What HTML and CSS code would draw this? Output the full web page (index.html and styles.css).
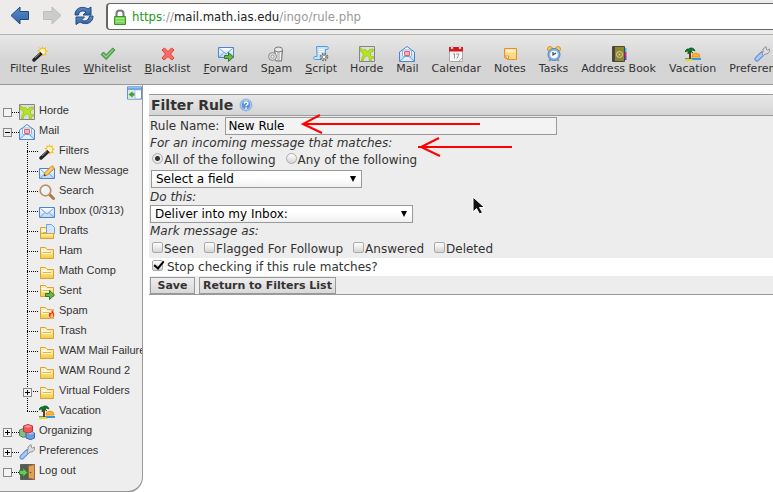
FILE: index.html
```html
<!DOCTYPE html>
<html lang="en">
<head>
    <meta charset="UTF-8">
    <title>Filter Rule</title>
    <meta name="viewport" content="width=device-width, initial-scale=1.0">
    <link rel="stylesheet" href="styles.css">
</head>
<body>
    <!-- icon set -->
    <svg class="sprite" aria-hidden="true">
        <defs>
            <linearGradient id="gold" x1="0" y1="0" x2="0" y2="1"><stop offset="0" stop-color="#fff6c4"/><stop offset="1" stop-color="#f3cb3f"/></linearGradient>
            <linearGradient id="sky" x1="0" y1="0" x2="0" y2="1"><stop offset="0" stop-color="#fff"/><stop offset="1" stop-color="#b9d5f4"/></linearGradient>
            <linearGradient id="navy" x1="0" y1="0" x2="0" y2="1"><stop offset="0" stop-color="#5e8cc4"/><stop offset="1" stop-color="#2f64a8"/></linearGradient>
        </defs>
        <symbol id="wand" viewBox="0 0 16 16">
            <path d="M10.500 0l1 2.500L14 1l-.5 3 2.500 1-2.500 1.500L15 9.500l-3-1-1.500 2.500-1-3-3 .5 1-2.500L5 4.500l3-1L7 1l2.500 1.500z" fill="#f9b91b"/>
            <circle cx="10.500" cy="5.500" r="2.800" fill="#fff3a8"/>
            <path d="M2 14L9 7.500" stroke="#222" stroke-width="3.400" stroke-linecap="round"/>
            <path d="M3 12L8 7.400" stroke="#8b8b8b" stroke-width="1"/>
            <path d="M9.500 7L11 5.500" stroke="#fafafa" stroke-width="3"/>
        </symbol>
        <symbol id="tick" viewBox="0 0 16 16">
            <path d="M1 8.500L3.500 6 6 8.700 12.700 2 15 4 6.200 13.600z" fill="#63b35c" stroke="#3f9140"/>
            <path d="M3 8l3 3 7-7.500" fill="none" stroke="#9bd68f"/>
        </symbol>
        <symbol id="cross" viewBox="0 0 16 16">
            <path d="M2 4L4.500 2 8 5.500 11.500 2 14 4 10.500 8 14 12 12 14 8 10.500 4 14 2 12 5.500 8z" fill="#ff6b64" stroke="#e23f3c"/>
        </symbol>
        <symbol id="envelope" viewBox="0 0 16 16">
            <path d="M.5 3.500h15v10H.5z" fill="url(#sky)" stroke="#4d84cb"/>
            <path d="M1.500 4.500L8 10l6.500-5.500M1.500 13L6 8.500M14.500 13L10 8.500" fill="none" stroke="#6c9ede"/>
        </symbol>
        <symbol id="go" viewBox="0 0 16 16">
            <path d="M6.500 9.500h4v-3l5 4.500-5 4.500v-3h-4z" fill="#6bb34e" stroke="#2f7a2a"/>
        </symbol>
        <symbol id="forward" viewBox="0 0 16 16">
            <use href="#envelope" y="-2"/><use href="#go"/>
        </symbol>
        <symbol id="trash" viewBox="0 0 16 16">
            <path d="M6.500 4l1.500 11h5.500l1-11z" fill="#c9c9c9" stroke="#777"/>
            <path d="M8.500 5v9M12.500 5v9" stroke="#f4f4f4"/>
            <ellipse cx="10.500" cy="3.500" rx="4" ry="2.500" fill="#e8e8e8" stroke="#777"/>
            <circle cx="4.500" cy="10.500" r="4" fill="#d8d8d8" stroke="#8a8a8a"/>
            <circle cx="4.500" cy="10.500" r="1.500" fill="#f7f7f7" stroke="#999"/>
        </symbol>
        <symbol id="script" viewBox="0 0 16 16">
            <path d="M3.500.5h11c1 0 1 3 0 3h-2v10H2c-2 0-2-3 0-3h2z" fill="#c5e0fb" stroke="#5b9bdc"/>
            <path d="M6 3.500h5M6 5.500h5M6 7.500h4" stroke="#fff"/>
            <circle cx="11" cy="11" r="3.300" fill="#ddd" stroke="#777" stroke-width="2" stroke-dasharray="1.600 1"/>
            <circle cx="11" cy="11" r="1.800" fill="#fff" stroke="#888"/>
        </symbol>
        <symbol id="horde" viewBox="0 0 16 16">
            <path d="M.5.500h15v15H.5z" fill="#dcdcdc" stroke="#858585"/>
            <path d="M1 1.500L4 4l2.500-.5L9 6l1.500-2.500L14 3l.5 2-3 1.500v3l1.500 1.500 2-.5v1.500l-2.500.5L12 15h-1.500L10 11.500 8 9.500 6.500 11 5 11.500 4 15H2.500l.5-3.500L4.500 9 3.500 6.500 1 5z" fill="#b5e61d" stroke="#8cbb16" stroke-width=".7"/>
        </symbol>
        <symbol id="mail" viewBox="0 0 16 16">
            <path d="M.5 6L4 3.500 8 .5 12 3.500 15.500 6v9.500H.5z" fill="url(#sky)" stroke="#4d84cb"/>
            <path d="M3.500 4h9v6l-4.500 2.500L3.500 10z" fill="#fff" stroke="#8bb0de"/>
            <path d="M5.500 5.500h5v4h-5z" fill="#f5b3bb" stroke="#dd6375"/>
            <path d="M1 15l5-4.500h4l5 4.500" fill="#e3effc" stroke="#6c9ede"/>
        </symbol>
        <symbol id="calendar" viewBox="0 0 16 16">
            <path d="M1.500 4v11.500h13V4z" fill="#f7f7f7" stroke="#aaa"/>
            <path d="M1 1h14v4.500H1z" fill="#d9141c"/>
            <path d="M3 0h2v3H3zM11 0h2v3h-2z" fill="#eee" stroke="#999" stroke-width=".5"/>
            <path d="M5 8.500l1.500-1v5M8 8h3l-2 4.500" fill="none" stroke="#999"/>
            <path d="M11 15l4-4" stroke="#aaa"/>
        </symbol>
        <symbol id="note" viewBox="0 0 16 16">
            <path d="M2.500 2.500h12v11H6l-3.500-2z" fill="#fbd983" stroke="#e58e2a"/>
            <path d="M3.500 3.500h10v3h-10z" fill="#fff1c7"/>
            <path d="M2.500 10h4v3.500z" fill="#fff" stroke="#e58e2a"/>
        </symbol>
        <symbol id="clock" viewBox="0 0 16 16">
            <path d="M3 15l2-2M13 15l-2-2" stroke="#999" stroke-width="2"/>
            <circle cx="4" cy="3" r="2.500" fill="#fbc94f" stroke="#d8922b"/><circle cx="12" cy="3" r="2.500" fill="#fbc94f" stroke="#d8922b"/>
            <circle cx="8" cy="8.500" r="6" fill="#88b8e8" stroke="#4c83c3"/>
            <circle cx="8" cy="8.500" r="3.800" fill="#fff"/>
            <path d="M7 6v3l3-2" fill="none" stroke="#345" stroke-width="1.200"/>
        </symbol>
        <symbol id="book" viewBox="0 0 16 16">
            <path d="M12 2h3.500v4H12z" fill="#2fc5ee"/><path d="M12 6h3.500v4H12z" fill="#f0189c"/><path d="M12 10h3.500v4H12z" fill="#7936d8"/>
            <path d="M1.500.5h12v15h-12z" fill="#8c8437" stroke="#4f4b2a"/>
            <path d="M3 1v14" stroke="#444" stroke-width="2"/>
            <circle cx="8.500" cy="8.500" r="3" fill="none" stroke="#e5d68a"/><circle cx="8.500" cy="8.500" r="1" fill="#e5d68a"/>
        </symbol>
        <symbol id="island" viewBox="0 0 16 16">
            <path d="M0 12h16v2H0z" fill="#2f9be8"/><path d="M0 13h7l2 2H0z" fill="#f5d415"/>
            <path d="M7 11a4 3.800 0 0 1 8 0z" fill="#ffb52e" stroke="#f39317"/>
            <path d="M4 5h2v8H4z" fill="#6b3b16"/>
            <path d="M0 5l2-2h2l1-1 2 0 2 1 1 2-3-1-1 1 2 2-3-2-2 3V5H2L0 6z" fill="#0c7a2a" stroke="#07601e" stroke-width=".8"/>
        </symbol>
        <symbol id="wrench" viewBox="0 0 16 16">
            <path d="M3 13L8 8" stroke="#5a8cd6" stroke-width="5" stroke-linecap="round"/>
            <path d="M3 13L8 8" stroke="#a9c9f4" stroke-width="3" stroke-linecap="round"/>
            <path d="M8 8l1-2V3l3-2.500.5 3 1 .5 2.500-1-.5 3L13 8h-2L9.500 9.500z" fill="#ddd" stroke="#8a8a8a" stroke-width=".9"/>
        </symbol>
        <symbol id="folder" viewBox="0 0 16 16">
            <path d="M1.500 3.500h5l1.500 2h6.500v9h-13z" fill="url(#gold)" stroke="#dd9f3b"/>
            <path d="M2.500 6.500h4l1.500-1" fill="none" stroke="#fff"/><path d="M4 8.500h8" stroke="#e8b440"/><path d="M3 9.500h10M3 7.500h8" stroke="#fffbe3"/>
        </symbol>
        <symbol id="drafts" viewBox="0 0 16 16">
            <use href="#folder"/><path d="M7.500.5h5l3 3v6h-8z" fill="#d3e7fd" stroke="#6fa3df"/><path d="M1.500 9.500h13v5h-13z" fill="url(#gold)" stroke="#dd9f3b"/>
        </symbol>
        <symbol id="sent" viewBox="0 0 16 16"><use href="#folder" y="-2"/><use href="#go"/></symbol>
        <symbol id="hot" viewBox="0 0 16 16">
            <use href="#folder"/><path d="M12.500 3c0 3 3.500 5 3 8.500-1 3.500-5 3.500-6 .5-.5-2 .5-3 1.500-4l1 1z" fill="#e8301c" stroke="#fff" stroke-width=".6"/>
            <path d="M13 9c2 3 1 4.500-.5 4.500S10.500 12 13 9z" fill="#ffd23b"/>
        </symbol>
        <symbol id="compose" viewBox="0 0 16 16">
            <use href="#envelope" y="1"/><path d="M5 12l1-3.500L12.500 2l2.500 2.500L8.500 11z" fill="#f9cf62" stroke="#c4872a"/><path d="M5 12l.5-2 1.500 1.500z" fill="#333"/><path d="M12 2.500l1.500-1.500 2 2L14.500 5z" fill="#f2a05d"/>
        </symbol>
        <symbol id="lens" viewBox="0 0 16 16">
            <path d="M10 10l4.500 4.500" stroke="#b9753c" stroke-width="3" stroke-linecap="round"/>
            <circle cx="6.500" cy="6.500" r="5.300" fill="#e8f2fb" stroke="#c58f5b" stroke-width="1.700"/><path d="M3.500 7a3 3 0 0 1 3-3.500" fill="none" stroke="#fff" stroke-width="1.500"/>
        </symbol>
        <symbol id="cubes" viewBox="0 0 16 16">
            <path d="M.5 6l4-1.500L8 6v6l-3.500 1.500-4-2z" fill="#7fbf85" stroke="#4b8a55"/>
            <path d="M7 9l4.500-1.500L15.500 9v5l-4 1.700L7 14z" fill="#6b9be0" stroke="#3a66a8"/>
            <path d="M7 9l4.500 1.500 4-1.500-4-1.500z" fill="#a9c8f3"/>
            <path d="M4.500 2L9 .5 13.500 2v5.500L9 9 4.500 7.500z" fill="#ee5757" stroke="#c73232"/>
            <path d="M5 2.500L9 4l4-1.500L9 1z" fill="#fa9290"/>
        </symbol>
        <symbol id="door" viewBox="0 0 16 16">
            <path d="M1.500.5h14v15h-14z" fill="#555b55" stroke="#5f5f5f"/>
            <path d="M9.500 2l6-1.500v15l-6-1.500z" fill="#dda35b" stroke="#a8692c"/><circle cx="11.500" cy="8.500" r=".8" fill="#7a4418"/>
            <path d="M.5 6.500H4V4l4.500 4.500L4 13v-2.500H.5z" fill="#6fc45c" stroke="#2f8a32"/>
        </symbol>
        <symbol id="collapse" viewBox="0 0 16 14">
            <path d="M.5.5h15v13H.5z" fill="#fff" stroke="#4d84cb"/><path d="M1 1h14v3H1z" fill="#77a6e4"/>
            <path d="M1 4h7v9H1z" fill="#d7ecd4"/><path d="M8.500 4v9" stroke="#9cbce4"/>
            <path d="M1.500 8.500L6 5v2h2v3H6v2z" fill="#4a9c4a"/>
        </symbol>
        <symbol id="help" viewBox="0 0 16 16">
            <circle cx="8" cy="8" r="7" fill="#5e93d8" stroke="#a9c3e6"/><circle cx="8" cy="8" r="5.500" fill="none" stroke="#cfe0f6"/>
            <path d="M6 6.500C6 4 10.200 4 10.200 6.300 10.200 7.800 8 7.800 8 9.500" fill="none" stroke="#fff" stroke-width="1.500"/><circle cx="8" cy="11.600" r="1" fill="#fff"/>
        </symbol>
        <symbol id="back" viewBox="0 0 20 20"><path d="M1 9.500L10 1v4.500h8.500v8H10V18z" fill="url(#navy)" stroke="#204a87"/></symbol>
        <symbol id="next" viewBox="0 0 20 20"><path d="M19 9.500L10 1v4.500H1.500v8H10V18z" fill="#cbcdcb" stroke="#bdbfbd"/></symbol>
        <symbol id="reload" viewBox="0 0 20 20">
            <path d="M1 9C1 3 6 0 12 2l2 1 3-2v8h-8l3-3C9 4 5 5 4.500 9z" fill="url(#navy)" stroke="#204a87"/>
            <path d="M19 10c0 6-5 9-11 7l-2-1-4 2.500V11h8.500l-3 3c3 2 7 1 8-4z" fill="url(#navy)" stroke="#204a87"/>
        </symbol>
        <symbol id="lock" viewBox="0 0 12 16">
            <path d="M2.500 8V4.500c0-4 7-4 7 0V8" fill="none" stroke="#777" stroke-width="2"/>
            <path d="M.5 7.500h11v8H.5z" fill="#7dd35c" stroke="#3f8f2c"/><path d="M2 9.500h8M2 12.500h8" stroke="#a6e88b"/>
        </symbol>
    </svg>

    <header class="browser">
        <button class="nav-btn" aria-label="Back"><svg><use href="#back"/></svg></button>
        <button class="nav-btn" aria-label="Forward" disabled><svg><use href="#next"/></svg></button>
        <button class="nav-btn" aria-label="Reload"><svg><use href="#reload"/></svg></button>
        <div class="address">
            <svg class="lock"><use href="#lock"/></svg>
            <span class="url"><span class="secure">https</span>://<span class="host">mail.math.ias.edu</span>/ingo/rule.php</span>
        </div>
    </header>

    <nav class="menu">
        <a href="#"><svg><use href="#wand"/></svg><span>Filter <u>R</u>ules</span></a>
        <a href="#"><svg><use href="#tick"/></svg><span><u>W</u>hitelist</span></a>
        <a href="#"><svg><use href="#cross"/></svg><span><u>B</u>lacklist</span></a>
        <a href="#"><svg><use href="#forward"/></svg><span><u>F</u>orward</span></a>
        <a href="#"><svg><use href="#trash"/></svg><span>S<u>p</u>am</span></a>
        <a href="#"><svg><use href="#script"/></svg><span><u>S</u>cript</span></a>
        <a href="#"><svg><use href="#horde"/></svg><span>Horde</span></a>
        <a href="#"><svg><use href="#mail"/></svg><span>Mail</span></a>
        <a href="#"><svg><use href="#calendar"/></svg><span>Calendar</span></a>
        <a href="#"><svg><use href="#note"/></svg><span>Notes</span></a>
        <a href="#"><svg><use href="#clock"/></svg><span>Tasks</span></a>
        <a href="#"><svg><use href="#book"/></svg><span>Address Book</span></a>
        <a href="#"><svg><use href="#island"/></svg><span>Vacation</span></a>
        <a href="#"><svg><use href="#wrench"/></svg><span>Preferences</span></a>
    </nav>

    <div class="page">
        <aside class="sidebar">
            <button class="collapse" aria-label="Collapse sidebar"><svg><use href="#collapse"/></svg></button>
            <ul class="tree">
                <li><i class="box"></i><i class="dots"></i><a href="#"><svg><use href="#horde"/></svg><span>Horde</span></a></li>
                <li><i class="box minus"></i><i class="dots"></i><a href="#"><svg><use href="#mail"/></svg><span>Mail</span></a></li>
            </ul>
            <ul class="tree sub">
                <li><a href="#"><svg><use href="#wand"/></svg><span>Filters</span></a></li>
                <li><a href="#"><svg><use href="#compose"/></svg><span>New Message</span></a></li>
                <li><a href="#"><svg><use href="#lens"/></svg><span>Search</span></a></li>
                <li><a href="#"><svg><use href="#envelope"/></svg><span>Inbox (0/313)</span></a></li>
                <li><a href="#"><svg><use href="#drafts"/></svg><span>Drafts</span></a></li>
                <li><a href="#"><svg><use href="#folder"/></svg><span>Ham</span></a></li>
                <li><a href="#"><svg><use href="#folder"/></svg><span>Math Comp</span></a></li>
                <li><a href="#"><svg><use href="#sent"/></svg><span>Sent</span></a></li>
                <li><a href="#"><svg><use href="#hot"/></svg><span>Spam</span></a></li>
                <li><a href="#"><svg><use href="#folder"/></svg><span>Trash</span></a></li>
                <li><a href="#"><svg><use href="#folder"/></svg><span>WAM Mail Failure</span></a></li>
                <li><a href="#"><svg><use href="#folder"/></svg><span>WAM Round 2</span></a></li>
                <li><i class="box plus"></i><a href="#"><svg><use href="#folder"/></svg><span>Virtual Folders</span></a></li>
                <li><a href="#"><svg><use href="#island"/></svg><span>Vacation</span></a></li>
            </ul>
            <ul class="tree">
                <li><i class="box plus"></i><i class="dots"></i><a href="#"><svg><use href="#cubes"/></svg><span>Organizing</span></a></li>
                <li><i class="box plus"></i><i class="dots"></i><a href="#"><svg><use href="#wrench"/></svg><span>Preferences</span></a></li>
                <li><i class="box"></i><i class="dots"></i><a href="#"><svg><use href="#door"/></svg><span>Log out</span></a></li>
            </ul>
        </aside>

        <main class="content">
            <form class="rule">
                <h1>Filter Rule <a href="#" aria-label="Help"><svg><use href="#help"/></svg></a></h1>
                <div class="row name-row">
                    <label for="name">Rule Name:</label>
                    <input type="text" id="name" value="New Rule">
                </div>
                <p><em>For an incoming message that matches:</em></p>
                <div class="row choices">
                    <label><input type="radio" name="combine" checked>All of the following</label>
                    <label><input type="radio" name="combine">Any of the following</label>
                </div>
                <div class="select field">
                    <select aria-label="Select a field"><option>Select a field</option></select>
                </div>
                <p><label for="action"><em>Do this:</em></label></p>
                <div class="select action">
                    <select id="action"><option>Deliver into my Inbox:</option></select>
                </div>
                <p><em>Mark message as:</em></p>
                <div class="row flags">
                    <label><input type="checkbox">Seen</label>
                    <label><input type="checkbox">Flagged For Followup</label>
                    <label><input type="checkbox">Answered</label>
                    <label><input type="checkbox">Deleted</label>
                </div>
                <div class="row stop">
                    <label><input type="checkbox" checked>Stop checking if this rule matches?</label>
                </div>
                <div class="row buttons">
                    <button type="button">Save</button>
                    <button type="button">Return to Filters List</button>
                </div>
            </form>

            <svg class="arrow arrow-name" viewBox="0 0 180 20"><path d="M179 10H2M19 1L2 10l19 9"/></svg>
            <svg class="arrow arrow-match" viewBox="0 0 96 20"><path d="M95 10H1M22 1L4 10l19 9"/></svg>
            <svg class="pointer" viewBox="0 0 14 20"><path d="M1 1v15l3.500-3.500L7.500 18l3-1.500-3-5h5z"/></svg>
        </main>
    </div>
</body>
</html>
```
FILE: styles.css
```css
:root {
    --line: #999;
    --panel: #eee;
    --text: #333;
}

* {
    margin: 0;
    padding: 0;
    box-sizing: border-box;
}

body {
    font-family: "DejaVu Sans", Verdana, sans-serif;
    font-size: 12px;
    color: var(--text);
    background: #fff;
    overflow: hidden;
}

a {
    color: inherit;
    text-decoration: none;
}

svg {
    display: block;
    width: 16px;
    height: 16px;
    flex: none;
}

.sprite {
    position: absolute;
    width: 0;
    height: 0;
}

/* browser bar */
.browser {
    display: flex;
    align-items: flex-start;
    gap: 12px;
    height: 35px;
    padding: 3px 0 0 10px;
    background: #edeceb;
    border-bottom: 1px solid #b4b4ae;
}

.nav-btn {
    padding-top: 3px;
    border: 0;
    background: none;
}

.nav-btn svg {
    width: 20px;
    height: 20px;
}

.address {
    flex: 1;
    display: flex;
    align-items: center;
    gap: 6px;
    height: 27px;
    padding-left: 6px;
    background: #fff;
    border: 1px solid #666;
    border-width: 1px 0 1px 2px;
    border-radius: 4px 0 0 4px;
}

.lock {
    width: 12px;
}

.url {
    font-family: "DejaVu Sans Condensed", "DejaVu Sans", sans-serif;
    font-stretch: condensed;
    font-size: 13px;
    color: #999;
}

.secure {
    color: #1a9a1a;
}

.host {
    color: #222;
}

/* top menu */
.menu {
    display: flex;
    gap: 13px;
    height: 50px;
    padding: 11px 0 0 10px;
    font-size: 11px;
    background: linear-gradient(#e8e8e8, #d5d5d5 50%);
    border-bottom: 1px solid var(--line);
    overflow: hidden;
}

.menu a {
    display: flex;
    flex-direction: column;
    align-items: center;
    flex: none;
    line-height: 14px;
    white-space: nowrap;
}

/* sidebar */
.page {
    display: flex;
    align-items: flex-start;
}

.sidebar {
    flex: none;
    width: 143px;
    padding-bottom: 9px;
    overflow: hidden;
    font: 11px "Liberation Sans", Arial, sans-serif;
    background: var(--panel);
    border: 1px solid var(--line);
    border-width: 0 1px 2px 0;
    border-radius: 0 0 16px 0;
}

.collapse {
    display: block;
    margin-left: auto;
    height: 17px;
    padding-bottom: 2px;
    border: 0;
    background: none;
}

.collapse svg {
    width: 15px;
    height: 14px;
}

.tree {
    padding-left: 3px;
    list-style: none;
}

.tree li {
    display: flex;
    align-items: center;
    height: 20px;
    white-space: nowrap;
}

.tree a {
    display: flex;
    align-items: center;
    gap: 4px;
}

.tree a span {
    padding-bottom: 5px;
}

.box {
    width: 9px;
    height: 9px;
    background: #f4f4f4;
    border: 1px solid #888;
}

.minus {
    background: linear-gradient(#000, #000) center / 5px 1px no-repeat;
}

.plus {
    background: linear-gradient(#000, #000) center / 5px 1px no-repeat,
        linear-gradient(#000, #000) center / 1px 5px no-repeat, #f4f4f4;
}

.dots {
    width: 7px;
    border-top: 1px dotted #000;
}

.sub {
    padding-left: 27px;
}

.sub li {
    padding-left: 12px;
    background: repeating-linear-gradient(#000 0 1px, transparent 1px 2px) 0 0 / 1px 20px no-repeat,
        repeating-linear-gradient(90deg, #000 0 1px, transparent 1px 2px) 0 9px / 11px 1px no-repeat;
}

.sub li:last-child {
    background-size: 1px 10px, 11px 1px;
}

.sub .box {
    margin: 0 7px 0 -16px;
}

/* rule form */
.content {
    position: relative;
    flex: 1;
    min-width: 0;
    padding: 9px 0 0 6px;
}

.rule {
    background: #ededed;
    border: 1px solid var(--line);
    border-width: 1px 0;
}

.rule h1 {
    display: flex;
    align-items: center;
    gap: 6px;
    height: 21px;
    padding-left: 2px;
    font-size: 14px;
    background: linear-gradient(#e8e8e8, #d5d5d5);
    border-bottom: 1px solid var(--line);
}

.rule h1 svg {
    width: 14px;
    height: 14px;
}

.rule p {
    padding: 1px 0 0 1px;
    line-height: 15px;
}

.row {
    display: flex;
    align-items: center;
    padding-left: 1px;
}

.row label {
    display: flex;
    align-items: center;
    white-space: nowrap;
}

.name-row {
    gap: 6px;
    padding-top: 1px;
}

.rule input[type="text"] {
    width: 332px;
    height: 18px;
    padding: 0 2px;
    font: inherit;
    color: #000;
    background: #f3f3f3;
    border: 1px solid var(--line);
}

.rule input[type="radio"],
.rule input[type="checkbox"] {
    appearance: none;
    width: 11px;
    height: 11px;
    margin: 0 1px 3px 2px;
    background: linear-gradient(#fff, #d4d4d4);
    border: 1px solid #aaa;
    border-radius: 2px;
}

.rule input[type="radio"] {
    border-radius: 50%;
}

.rule input[type="radio"]:checked {
    background: radial-gradient(#333 0 2px, #e8e8e8 3px);
}

.rule input[type="checkbox"]:checked::after {
    content: "";
    display: block;
    width: 4px;
    height: 8px;
    margin: -2px 0 0 3px;
    border: solid #000;
    border-width: 0 2px 2px 0;
    transform: rotate(40deg);
}

.choices {
    gap: 8px;
    height: 17px;
}

.select {
    position: relative;
    margin-left: 1px;
}

.field {
    width: 211px;
    margin: 2px 0 1px 2px;
}

.action {
    width: 263px;
}

.select select {
    appearance: none;
    display: block;
    width: 100%;
    height: 18px;
    padding-left: 4px;
    font: inherit;
    color: #000;
    background: linear-gradient(#fff 40%, #f0f0f0);
    border: 1px solid var(--line);
    border-radius: 0;
}

.select::after {
    content: "";
    position: absolute;
    top: 6px;
    right: 6px;
    border: solid transparent;
    border-width: 6px 3px 0;
    border-top-color: #000;
    pointer-events: none;
}

.flags {
    gap: 8px;
    height: 19px;
}

.stop {
    height: 18px;
    background: #fff;
}

.rule .stop input {
    margin-right: 4px;
}

.buttons {
    gap: 4px;
    height: 18px;
}

.buttons button {
    min-width: 45px;
    height: 17px;
    padding: 0 3px;
    font: bold 11px "DejaVu Sans", Verdana, sans-serif;
    color: var(--text);
    background: linear-gradient(#eee, #d8d8d8);
    border: 1px solid var(--line);
}

/* annotations over the form */
.arrow {
    position: absolute;
    height: 20px;
    fill: none;
    stroke: #f00;
    stroke-width: 2;
}

.arrow-name {
    top: 29px;
    left: 158px;
    width: 180px;
}

.arrow-match {
    top: 52px;
    left: 274px;
    width: 96px;
}

.pointer {
    position: absolute;
    top: 111px;
    left: 329px;
    width: 14px;
    height: 20px;
    fill: #111;
    stroke: #fff;
}
```
